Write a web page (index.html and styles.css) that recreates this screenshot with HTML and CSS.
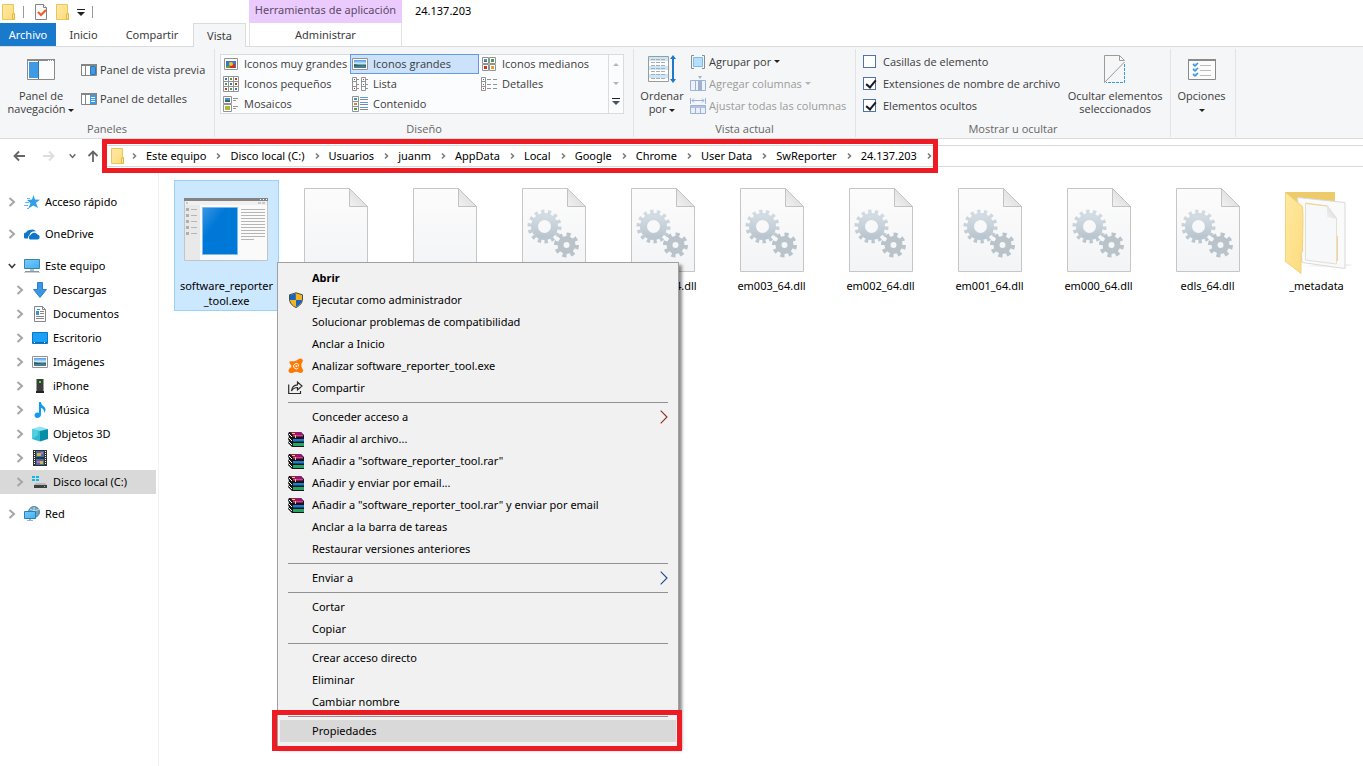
FILE: index.html
```html
<!DOCTYPE html>
<html lang="es">
<head>
<meta charset="utf-8">
<title>24.137.203</title>
<link rel="stylesheet" href="styles.css">
</head>
<body>
<svg class="defs" aria-hidden="true">
  <defs>
    <linearGradient id="g-yellow" x1="0" y1="0" x2="1" y2="1"><stop offset="0" stop-color="#ffe9a2"/><stop offset="1" stop-color="#fddb7c"/></linearGradient>
    <linearGradient id="g-page" x1="0" y1="0" x2="0" y2="1"><stop offset="0" stop-color="#fcfcfc"/><stop offset="1" stop-color="#f3f4f6"/></linearGradient>
    <linearGradient id="g-fold" x1="0" y1="1" x2="1" y2="0"><stop offset="0" stop-color="#f2f2f2"/><stop offset="1" stop-color="#d2d2d2"/></linearGradient>
    <linearGradient id="g-blue" x1="0" y1="0" x2="1" y2="1"><stop offset="0" stop-color="#3a96e3"/><stop offset=".35" stop-color="#0078d7"/></linearGradient>
    <linearGradient id="g-screen" x1="0" y1="0" x2="1" y2="1"><stop offset="0" stop-color="#79cbfb"/><stop offset="1" stop-color="#3fb0f5"/></linearGradient>
    <linearGradient id="g-sky" x1="0" y1="0" x2="0" y2="1"><stop offset="0" stop-color="#4b97ec"/><stop offset=".5" stop-color="#d9f0fb"/><stop offset=".6" stop-color="#3f7d86"/><stop offset="1" stop-color="#4d7ca0"/></linearGradient>
    <linearGradient id="g-gear" x1="0" y1="0" x2="0" y2="1"><stop offset="0" stop-color="#d3dbe2"/><stop offset="1" stop-color="#bac6cf"/></linearGradient>
  </defs>
  <symbol id="folder" viewBox="0 0 16 16"><path d="M1.5.5h11v9h1v6h-12z" fill="url(#g-yellow)" stroke="#e8c65c"/><path d="M11.5 15v-5h2v5.500z" fill="#ffe48f" stroke="#e3b93f"/></symbol>
  <symbol id="check-doc" viewBox="0 0 16 16"><path d="M2.500.5h8l3 3v12h-11z" fill="#fafafa" stroke="#858585"/><path d="M10.500.5v3h3" fill="#fff" stroke="#858585"/><path d="M5 8l3 3 5-5" fill="none" stroke="#ee5a24" stroke-width="2"/></symbol>
  <symbol id="pane-nav" viewBox="0 0 28 21"><path fill="#fcfcfc" stroke="#8a8a8a" d="M.5.5h27v20H.5z"/><path fill="#8a8a8a" d="M0 0h28v2H0z"/><path fill="#409ae2" d="M2 3h9v16H2z"/><path fill="#2e78b5" d="M11 2h1v18h-1z"/><path fill="#fff" d="M21 1h1v1h-1zm2 0h1v1h-1zm2 0h1v1h-1z"/></symbol>
  <symbol id="pane-preview" viewBox="0 0 16 12"><path fill="#fff" stroke="#858585" d="M.5.5h15v11H.5z"/><path fill="#858585" d="M0 0h16v2H0zM4 2h1v9H4z"/><path fill="#409ae2" stroke="#2878bf" d="M9.500 2.500h5v8h-5z"/></symbol>
  <symbol id="pane-details" viewBox="0 0 16 12"><path fill="#fff" stroke="#858585" d="M.5.5h15v11H.5z"/><path fill="#858585" d="M0 0h16v2H0zM4 2h1v9H4z"/><path fill="#409ae2" d="M9 2h6v9H9z"/><path d="M10 4.500h4M10 6.500h4M10 8.500h4" stroke="#e3f2fd"/></symbol>
  <symbol id="photo-xl" viewBox="0 0 16 14"><path fill="#fff" stroke="#939393" d="M1.500 1.500h13v11h-13z"/><path fill="#3f76cc" d="M3 4h10v7H3z"/><path fill="#d92e1c" d="M7 7h5v4H7z"/><circle cx="8" cy="7" r="2" fill="#f2c522"/><path fill="#5ba63d" d="M3 9h4v2H3z"/></symbol>
  <symbol id="photo" viewBox="0 0 16 14"><path fill="#fff" stroke="#939393" d="M.5 1.500h15v11H.5z"/><path fill="url(#g-sky)" d="M2 3h12v8H2z"/><path fill="#2d6060" d="M2 7l4 1 5 1 3-1v1H2z"/></symbol>
  <symbol id="ic-medium" viewBox="0 0 16 14"><path fill="#fff" stroke="#939393" d="M1.500.5h6v6h-6zM8.500.5h6v6h-6zM1.500 7.500h6v6h-6zM8.500 7.500h6v6h-6z"/><path fill="#4a8fce" d="M3 2h3v2H3z"/><path fill="#3c6c62" d="M3 4h3v1H3z"/><path fill="#4f9d4b" d="M10 2h3v3h-3z"/><path fill="#cf2f20" d="M3 9h3v3H3z"/><path fill="#e3a42a" d="M10 9h3v3h-3z"/></symbol>
  <symbol id="ic-small" viewBox="0 0 16 16"><path fill="#fff" stroke="#939393" d="M.5.5h15v15H.5zM5.500.5v15M10.500.5v15M.5 5.500h15M.5 10.500h15"/><path fill="#3a71be" d="M2 2h2v2H2zm5 5h2v2H7zm5 5h2v2h-2z"/><path fill="#4e9b45" d="M7 2h2v2H7zM2 7h2v2H2zm5 5h2v2H7z"/><path fill="#c93728" d="M12 2h2v2h-2zm0 5h2v2h-2zM2 12h2v2H2z"/></symbol>
  <symbol id="ic-list" viewBox="0 0 16 14"><path fill="#fff" stroke="#939393" d="M.5.5h4v13h-4zM9.500.5h4v13h-4zM.5 4.500h4M.5 9.500h4M9.500 4.500h4M9.500 9.500h4M5 2.500h2M5 7.500h2M5 11.500h2M14 2.500h2M14 7.500h2M14 11.500h2"/><path fill="#3a71be" d="M2 2h1v1H2zm9 5h1v1h-1z"/><path fill="#c93728" d="M2 11h1v1H2zm9-9h1v1h-1z"/></symbol>
  <symbol id="ic-details" viewBox="0 0 16 14"><path fill="#fff" stroke="#939393" d="M.5.5h4v13h-4zM.5 4.500h4M.5 9.500h4M6 2.500h4M6 7.500h4M6 11.500h4M12 2.500h4M12 7.500h4M12 11.500h4"/><path fill="#3a71be" d="M2 2h1v1H2z"/><path fill="#c93728" d="M2 7h1v1H2zm0 4h1v1H2z"/></symbol>
  <symbol id="ic-tiles" viewBox="0 0 16 16"><path fill="#fff" stroke="#939393" d="M.5.5h8v7h-8zM.5 8.500h8v7h-8zM10 2.500h5M10 4.500h3M10 10.500h5M10 12.500h3"/><path fill="#4a8fce" d="M2 2h5v2H2z"/><path fill="#3c6c62" d="M2 4h5v2H2z"/><path fill="#9bbf3d" d="M2 10h5v4H2z"/><path fill="#e3a42a" d="M3 11h2v2H3z"/></symbol>
  <symbol id="ic-content" viewBox="0 0 16 16"><path fill="#fff" stroke="#939393" d="M.5.5h6v15h-6zM.5 5.500h6M.5 10.500h6"/><path fill="#4a8fce" d="M2 2h3v2H2z"/><path fill="#c98d34" d="M2 7h3v2H2z"/><path fill="#4e9b45" d="M2 12h3v2H2z"/><path d="M8 1.500h8M8 6.500h8M8 11.500h8" stroke="#5a9be8"/><path d="M8 3.500h8M8 8.500h8M8 13.500h8" stroke="#878787"/></symbol>
  <symbol id="sort" viewBox="0 0 28 28"><path fill="#fff" stroke="#9b9b9b" d="M.5 1.500h20v25H.5z"/><path fill="#cbe6f7" d="M1 2h19v4H1zm0 9h19v4H1zm0 8h19v4H1z"/><path d="M3 4.500h15M3 7.500h15M3 10.500h15M3 13.500h15M3 16.500h15M3 19.500h15M3 23.500h15" stroke="#a9adb0" stroke-dasharray="4 1"/><path fill="#1f78c8" d="M25 0l3 4h-2v20h2l-3 4-3-4h2V4h-2z"/></symbol>
  <symbol id="group" viewBox="0 0 16 14"><path fill="none" stroke="#8b8b8b" d="M4 .5H1.500v13H4M12 .5h2.500v13H12"/><path fill="#b5dffb" stroke="#77bdf0" d="M3.500 2.500h9v9h-9z"/></symbol>
  <symbol id="addcol" viewBox="0 0 16 16"><path fill="#eef2fb" stroke="#a0b2d4" d="M.5 4.500h15v10H.5zM5.500 4.500v10"/><path fill="#9fb1d0" d="M8 4h4v11H8zM8 0h4l-2 3z"/></symbol>
  <symbol id="fitcol" viewBox="0 0 16 16"><path fill="none" stroke="#9db0d6" d="M.5 0v6M15.500 0v6M2 2.500h12M4 .5l-2 2 2 2M12 .5l2 2-2 2"/><path fill="#eaf0fb" stroke="#9db0d6" d="M.5 7.500h15v8H.5zM5.500 10v5M10.500 10v5"/><path fill="#b2c1df" d="M1 8h14v2H1z"/></symbol>
  <symbol id="hide" viewBox="0 0 22 28"><path fill="#f6f6f6" d="M.5.5H16L20.500 6v1L.5 27.500z"/><path fill="none" stroke="#9b9b9b" d="M15.500.5H.5v27L20.500 7"/><path fill="#fff" stroke="#9b9b9b" d="M15.500.5v5h5z"/><path fill="none" stroke="#3c97e3" stroke-dasharray="3 1" d="M20.500 9v18.500H2"/></symbol>
  <symbol id="options" viewBox="0 0 28 21"><path fill="#fcfcfc" stroke="#8a8a8a" d="M.5.5h27v20H.5z"/><path fill="#8a8a8a" d="M0 0h28v2H0z"/><path fill="#cde6f9" d="M5 4h4v3H5zm0 5h4v3H5zm0 5h4v3H5z"/><path fill="none" stroke="#3593e0" stroke-width="1.500" d="M5 5l2 2 3-3M5 10l2 2 3-3M5 15l2 2 3-3"/><path stroke="#bcbcbc" d="M12 6.500h11M12 11.500h11M12 16.500h11"/></symbol>
  <symbol id="chev" viewBox="0 0 8 10"><path d="M1.500 1L6 5 1.500 9" fill="none" stroke="currentColor" stroke-width="2"/></symbol>
  <symbol id="chev-s" viewBox="0 0 6 8"><path d="M1 1.500L3.500 4 1 6.500" fill="none" stroke="#7b7b7b" stroke-width="1.600"/></symbol>
  <symbol id="chev-d" viewBox="0 0 10 8"><path d="M1 1.500L5 6l4-4.500" fill="none" stroke="currentColor" stroke-width="2"/></symbol>
  <symbol id="arrow" viewBox="0 0 12 12"><path d="M12 6H1.500M6 1.500L1.500 6 6 10.500" fill="none" stroke="currentColor" stroke-width="1.800"/></symbol>
  <symbol id="star" viewBox="0 0 16 16"><path fill="#2f9fe9" d="M9.500 1l1.500 4.500 5 .3-4 3 2 5.200-4.700-2.600-5 3 2.200-5.200L3 6l5-.5z"/><path d="M1 8.500h4M0 11.500h4M3 4.500h3M3 14.500h2" stroke="#5fb8f2"/></symbol>
  <symbol id="cloud" viewBox="0 0 16 16"><path fill="#1176c8" d="M1 12.500a3.200 3.200 0 0 1 1-6A4 4 0 0 1 6 4a5 5 0 0 1 6 1.500A5 5 0 0 0 5.500 9 4 4 0 0 0 4 12.500z"/><path fill="#1176c8" d="M6 13.500a2.500 2.500 0 0 1 .5-4.500A4 4 0 0 1 13.500 8.500a2.600 2.600 0 0 1 .5 5z"/></symbol>
  <symbol id="pc" viewBox="0 0 16 16"><path fill="url(#g-screen)" stroke="#4183a8" d="M.5 1.500h15v9H.5z"/><path fill="#b2c0ca" d="M6 11h4v2H6z"/><path fill="#8298a8" d="M1 13h14v1H1z"/><path fill="#c6d1d9" d="M0 14h16v1H0z"/></symbol>
  <symbol id="down" viewBox="0 0 16 16"><path fill="#3b97e3" stroke="#2e7fc5" d="M5.500.5h5v7h4L8 15.500 1.500 7.500h4z"/></symbol>
  <symbol id="doc" viewBox="0 0 16 16"><path fill="#fcfcfc" stroke="#868686" d="M2.500.5h8l3 3v12h-11z"/><path fill="none" stroke="#868686" d="M10.500.5v3h3M8 5.500h4M8 7.500h4M4 10.500h8M4 12.500h8"/><path fill="#3694d6" d="M4 5h3v4H4zM5 3h3v1H5z"/></symbol>
  <symbol id="desk" viewBox="0 0 16 16"><path fill="#1ca0f7" stroke="#0778c6" d="M.5 2.500h15v11H.5z"/><path fill="#0b6caf" d="M1 12h14v1H1z"/><path fill="#fff" d="M2 12h1v1H2zm10 0h1v1h-1z"/></symbol>
  <symbol id="phone" viewBox="0 0 16 16"><path fill="#3c3c3c" d="M4.500 1h7v12h-7z"/><path fill="#252525" d="M4 13h8v2H4z"/><path fill="#3dea35" d="M7 3h2v2H7z"/></symbol>
  <symbol id="music" viewBox="0 0 16 16"><path fill="#129cf0" d="M7 0h2c0 4 5 4 4.500 8.500L12 11c.5-3-1-4.500-3-5v7c-.5 3.500-6.500 4-6.500.5C2.500 11 5 10 7 11z"/></symbol>
  <symbol id="cube" viewBox="0 0 16 16"><path fill="#8fe4ef" d="M0 3l8-2.500L16 3 8 6z"/><path fill="#2db9d0" d="M0 3l8 2v10.500L0 13z"/><path fill="#078fa8" d="M16 3L8 5v10.500l8-2.500z"/><path fill="#53cfe0" d="M0 3l6 1.500V9L0 13z"/></symbol>
  <symbol id="video" viewBox="0 0 16 16"><path fill="#333" d="M1 0h14v16H1z"/><path fill="#3d6db3" d="M4 1h8v6H4zm0 8h8v6H4z"/><path fill="#deb33a" d="M5 3h4v3H5zm3 8h3v3H8z"/><path fill="#c86ba6" d="M9 2h2v2H9zm-4 9h3v2H5z"/><path stroke="#fff" stroke-dasharray="1 1" d="M2.500 1v14M13.500 1v14"/></symbol>
  <symbol id="disk" viewBox="0 0 16 16"><path fill="#11b5ee" d="M0 2h3v2H0zm4 0h3v2H4zM0 5h3v2H0zm4 0h3v2H4z"/><path fill="#b7b7b7" d="M4 9h9l2 2H2z"/><path fill="#3f3f3f" d="M2 11h13v3H2z"/><path fill="#53e043" d="M12 12h1v1h-1z"/></symbol>
  <symbol id="net" viewBox="0 0 16 16"><circle cx="10" cy="6" r="5.500" fill="#6fa3bd" stroke="#4e86a5"/><path fill="none" stroke="#cbe1eb" d="M6 3c3 2 6 2 9 0M10 1v6"/><path fill="url(#g-screen)" stroke="#2a7fb8" d="M.5 5.500h11v7H.5z"/><path fill="#a3b3bf" d="M5 13h2v1H5zM3 14h6v1H3z"/></symbol>
  <symbol id="shield" viewBox="0 0 16 16"><path fill="#f6b41c" stroke="#3f4d56" d="M8 .8L14.500 2.800V7c0 4-3 7-6.500 8.500C4.500 14 1.500 11 1.500 7V2.800z"/><path fill="#1464c0" d="M7.800 1.500V8H2V3.200zM8 8h6c-.4 3-3 5.500-6 6.800z"/></symbol>
  <symbol id="avast" viewBox="0 0 16 16"><path fill="#ff7800" d="M1.500 3.500C4 2.500 6.500 4 8.500 2.500 10 1.500 11 .5 12.500.5c2 0 2.800 2 2 3.500-.8 1.200-1.700 2.500-1 4.500.5 1.700 1.700 2.800 1.500 4.500-.3 2-2.500 2.300-4 1.500-1.700-1-3.700-1.200-5.500 0C4 15.500.5 15.500.5 12.500c0-2 2.500-2.500 3-4C4 7 1 6.500 1.500 3.500z"/><path fill="none" stroke="#fff" d="M10.300 10a2.700 2.700 0 1 1 .3-3.300L10 8.500"/><path fill="#fff" d="M7.500 7.300h1.600V9H7.500z"/></symbol>
  <symbol id="share" viewBox="0 0 16 16"><path fill="none" stroke="#2c2c2c" stroke-width="1.200" d="M.7 4.500v9h11.800V11M3.500 11C4 7 6 5 9.500 4.800V2L14 6l-4.500 4V7.500C6.500 7.500 5 8.500 3.500 11z"/></symbol>
  <symbol id="rar" viewBox="0 0 16 16"><path fill="#151515" d="M1 1h12l3 3v12H4l-4-4 1-2-1-2 1-2-1-3z"/><path fill="#99186d" d="M2 1h11l2 3H5z"/><path fill="#d53d98" d="M5 4h10v1H5z"/><path fill="#8f125e" d="M5 5h10v1H5z"/><path fill="#237bc8" d="M5 8h11v2H5z"/><path fill="#0d4885" d="M5 10h11v1H5z"/><path fill="#27a465" d="M5 12h11v3H5z"/><path stroke="#fff" fill="none" d="M1 3l3 3M1 7l3 3M1 11l3 3"/><path fill="#edd53d" d="M4 2h3v1H4zM7 4h1v3H7z"/></symbol>
  <symbol id="sub" viewBox="0 0 8 14"><path d="M.7.700L7 7 .7 13.300" fill="none" stroke="currentColor" stroke-width="1.100"/></symbol>
  <symbol id="big-app" viewBox="0 0 96 96"><path fill="#fafafa" stroke="#c4c4c4" d="M5.500 16.500h83v62h-83z"/><path fill="#838383" d="M5 16h84v3H5z"/><path fill="#f0f0f0" d="M6 19h82v4H6z"/><path fill="#e9e9e9" d="M6 23h15v55H6z"/><path stroke="#fff" d="M81 17.500h1M84 17.500h1M87 17.500h1"/><path stroke="#c7c7c7" stroke-width="2" d="M7 21h2M79 21h3M83 21h3"/><path stroke="#afafaf" stroke-width="3" d="M7 27.500h3M7 33.500h3M7 39.500h3M7 45.500h3M7 51.500h3"/><path stroke="#b5b5b5" d="M12 27.500h6M12 33.500h6M12 39.500h6M12 45.500h6M12 51.500h6M62 27.500h24M62 30.500h24M62 33.500h24M62 36.500h24M62 39.500h24M62 42.500h24M62 45.500h24M62 48.500h24M62 51.500h24M62 54.500h24M62 57.500h13"/><path fill="url(#g-blue)" stroke="#82b9e5" d="M23.500 25.500h35v47h-35z"/></symbol>
  <symbol id="big-file" viewBox="0 0 96 96"><path fill="url(#g-page)" stroke="#c6c6c6" d="M16.500 6.500h45l18 18v65h-63z"/><path fill="url(#g-fold)" stroke="#c2c2c2" d="M61.500 6.500v18h18z"/></symbol>
  <symbol id="big-dll" viewBox="0 0 96 96"><use href="#big-file"/><g fill="none" stroke="url(#g-gear)"><circle cx="38.500" cy="44.500" r="10" stroke-width="7"/><circle cx="38.500" cy="44.500" r="14.500" stroke-width="5" pathLength="28" stroke-dasharray="1 1"/></g><g fill="none" stroke="#b9c3c9"><circle cx="60.500" cy="63" r="6" stroke-width="6"/><circle cx="60.500" cy="63" r="10" stroke-width="5" pathLength="16" stroke-dasharray="1 1"/></g></symbol>
  <symbol id="big-folder" viewBox="0 0 96 96"><path fill="#eccb68" d="M16 10h50v70H32z"/><path fill="#f2f2f2" d="M34 84l36 2 14-3-10-2z"/><path fill="#fafafa" stroke="#dadada" d="M28.500 15.500l47.500 5v66l-43-6z"/><path fill="#f7f8f9" stroke="#e3dfd2" d="M36.500 21l22 3 9 12v46l-31-4z"/><path fill="none" stroke="#f0d68c" d="M37 21.500l21 2.500M68.500 54v25"/><path fill="url(#g-fold)" d="M58 23v12l10 2z"/><path fill="url(#g-yellow)" stroke="#f2d27b" d="M16.500 10.500l17 14c1 15 0 28 0 45l-1.500 2v20l-15.500-12z"/></symbol>
</svg>

<header class="window-head">
  <div class="titlebar">
    <div class="quick">
      <svg class="i16"><use href="#folder"/></svg><span class="bar"></span>
      <button type="button" aria-label="Propiedades" class="plain"><svg class="i16"><use href="#check-doc"/></svg></button>
      <button type="button" aria-label="Nueva carpeta" class="plain"><svg class="i16"><use href="#folder"/></svg></button>
      <button type="button" aria-label="Personalizar" class="plain quick-more"><span class="caret"></span></button><span class="bar"></span>
    </div>
    <div class="context-title">Herramientas de aplicación</div>
    <h1 class="title">24.137.203</h1>
  </div>
  <nav class="tabs">
    <button type="button" class="tab tab-file">Archivo</button>
    <button type="button" class="tab tab-home">Inicio</button>
    <button type="button" class="tab tab-share">Compartir</button>
    <button type="button" class="tab tab-view">Vista</button>
    <button type="button" class="tab tab-manage">Administrar</button>
  </nav>
</header>

<section class="ribbon">
  <div class="group group-panes">
    <div class="group-body">
      <button type="button" class="big"><span class="big-icon"><svg width="28" height="21"><use href="#pane-nav"/></svg></span><span>Panel de<br>navegación <i class="caret"></i></span></button>
      <div class="stack stack-two">
        <button type="button" class="cmd"><svg width="16" height="12"><use href="#pane-preview"/></svg>Panel de vista previa</button>
        <button type="button" class="cmd"><svg width="16" height="12"><use href="#pane-details"/></svg>Panel de detalles</button>
      </div>
    </div>
    <div class="group-label">Paneles</div>
  </div>
  <div class="group group-layout">
    <div class="group-body">
      <div class="gallery">
        <div class="gallery-grid">
          <button type="button" class="view"><svg class="i16"><use href="#photo-xl"/></svg>Iconos muy grandes</button>
          <button type="button" class="view view-on"><svg class="i16"><use href="#photo"/></svg>Iconos grandes</button>
          <button type="button" class="view"><svg class="i16"><use href="#ic-medium"/></svg>Iconos medianos</button>
          <button type="button" class="view"><svg class="i16"><use href="#ic-small"/></svg>Iconos pequeños</button>
          <button type="button" class="view"><svg class="i16"><use href="#ic-list"/></svg>Lista</button>
          <button type="button" class="view"><svg class="i16"><use href="#ic-details"/></svg>Detalles</button>
          <button type="button" class="view"><svg class="i16"><use href="#ic-tiles"/></svg>Mosaicos</button>
          <button type="button" class="view"><svg class="i16"><use href="#ic-content"/></svg>Contenido</button>
        </div>
        <div class="gallery-scroll">
          <button type="button" class="plain" aria-label="Subir"><span class="caret caret-up caret-dim"></span></button>
          <button type="button" class="plain" aria-label="Bajar"><span class="caret caret-dim"></span></button>
          <button type="button" class="plain" aria-label="Más"><span class="caret caret-more"></span></button>
        </div>
      </div>
    </div>
    <div class="group-label">Diseño</div>
  </div>
  <div class="group group-current">
    <div class="group-body">
      <button type="button" class="big"><span class="big-icon"><svg width="28" height="28"><use href="#sort"/></svg></span><span>Ordenar<br>por <i class="caret"></i></span></button>
      <div class="stack">
        <button type="button" class="cmd"><svg class="i16"><use href="#group"/></svg>Agrupar por <i class="caret"></i></button>
        <button type="button" class="cmd" disabled><svg class="i16"><use href="#addcol"/></svg>Agregar columnas <i class="caret caret-dim"></i></button>
        <button type="button" class="cmd" disabled><svg class="i16"><use href="#fitcol"/></svg>Ajustar todas las columnas</button>
      </div>
    </div>
    <div class="group-label">Vista actual</div>
  </div>
  <div class="group group-show">
    <div class="group-body">
      <div class="stack">
        <label class="check"><input type="checkbox">Casillas de elemento</label>
        <label class="check"><input type="checkbox" checked>Extensiones de nombre de archivo</label>
        <label class="check"><input type="checkbox" checked>Elementos ocultos</label>
      </div>
      <button type="button" class="big"><span class="big-icon"><svg width="22" height="28"><use href="#hide"/></svg></span><span>Ocultar elementos<br>seleccionados</span></button>
    </div>
    <div class="group-label">Mostrar u ocultar</div>
  </div>
  <div class="group group-options">
    <div class="group-body">
      <button type="button" class="big"><span class="big-icon"><svg width="28" height="21"><use href="#options"/></svg></span><span>Opciones<br><i class="caret"></i></span></button>
    </div>
  </div>
</section>

<div class="address-row">
  <div class="nav-buttons">
    <button type="button" class="plain" aria-label="Atrás"><svg width="12" height="12"><use href="#arrow"/></svg></button>
    <button type="button" class="plain forward" aria-label="Adelante" disabled><svg width="12" height="12"><use href="#arrow"/></svg></button>
    <button type="button" class="plain recent" aria-label="Recientes"><svg width="7" height="6"><use href="#chev-d"/></svg></button>
    <button type="button" class="plain up" aria-label="Arriba"><svg width="12" height="12"><use href="#arrow"/></svg></button>
  </div>
  <nav class="address">
    <svg class="i16"><use href="#folder"/></svg>
    <svg class="crumb-sep"><use href="#chev-s"/></svg><a href="#">Este equipo</a>
    <svg class="crumb-sep"><use href="#chev-s"/></svg><a href="#">Disco local (C:)</a>
    <svg class="crumb-sep"><use href="#chev-s"/></svg><a href="#">Usuarios</a>
    <svg class="crumb-sep"><use href="#chev-s"/></svg><a href="#">juanm</a>
    <svg class="crumb-sep"><use href="#chev-s"/></svg><a href="#">AppData</a>
    <svg class="crumb-sep"><use href="#chev-s"/></svg><a href="#">Local</a>
    <svg class="crumb-sep"><use href="#chev-s"/></svg><a href="#">Google</a>
    <svg class="crumb-sep"><use href="#chev-s"/></svg><a href="#">Chrome</a>
    <svg class="crumb-sep"><use href="#chev-s"/></svg><a href="#">User Data</a>
    <svg class="crumb-sep"><use href="#chev-s"/></svg><a href="#">SwReporter</a>
    <svg class="crumb-sep"><use href="#chev-s"/></svg><a href="#">24.137.203</a>
    <svg class="crumb-sep"><use href="#chev-s"/></svg>
  </nav>
  <div class="mark mark-address"></div>
</div>

<div class="main">
  <aside class="tree">
    <a href="#" class="node"><svg class="chev"><use href="#chev"/></svg><svg class="i16"><use href="#star"/></svg>Acceso rápido</a>
    <a href="#" class="node"><svg class="chev"><use href="#chev"/></svg><svg class="i16"><use href="#cloud"/></svg>OneDrive</a>
    <div class="branch">
      <a href="#" class="node"><svg class="chev chev-open"><use href="#chev-d"/></svg><svg class="i16"><use href="#pc"/></svg>Este equipo</a>
      <a href="#" class="node child"><svg class="chev"><use href="#chev"/></svg><svg class="i16"><use href="#down"/></svg>Descargas</a>
      <a href="#" class="node child"><svg class="chev"><use href="#chev"/></svg><svg class="i16"><use href="#doc"/></svg>Documentos</a>
      <a href="#" class="node child"><svg class="chev"><use href="#chev"/></svg><svg class="i16"><use href="#desk"/></svg>Escritorio</a>
      <a href="#" class="node child"><svg class="chev"><use href="#chev"/></svg><svg class="i16"><use href="#photo"/></svg>Imágenes</a>
      <a href="#" class="node child"><svg class="chev"><use href="#chev"/></svg><svg class="i16"><use href="#phone"/></svg>iPhone</a>
      <a href="#" class="node child"><svg class="chev"><use href="#chev"/></svg><svg class="i16"><use href="#music"/></svg>Música</a>
      <a href="#" class="node child"><svg class="chev"><use href="#chev"/></svg><svg class="i16"><use href="#cube"/></svg>Objetos 3D</a>
      <a href="#" class="node child"><svg class="chev"><use href="#chev"/></svg><svg class="i16"><use href="#video"/></svg>Vídeos</a>
      <a href="#" class="node child node-on"><svg class="chev"><use href="#chev"/></svg><svg class="i16"><use href="#disk"/></svg>Disco local (C:)</a>
    </div>
    <a href="#" class="node"><svg class="chev"><use href="#chev"/></svg><svg class="i16"><use href="#net"/></svg>Red</a>
  </aside>
  <main class="files">
    <div class="file file-on"><svg class="i96"><use href="#big-app"/></svg><span>software_reporter<br>_tool.exe</span></div>
    <div class="file"><svg class="i96"><use href="#big-file"/></svg></div>
    <div class="file"><svg class="i96"><use href="#big-file"/></svg></div>
    <div class="file"><svg class="i96"><use href="#big-dll"/></svg></div>
    <div class="file"><svg class="i96"><use href="#big-dll"/></svg><span>em004_64.dll</span></div>
    <div class="file"><svg class="i96"><use href="#big-dll"/></svg><span>em003_64.dll</span></div>
    <div class="file"><svg class="i96"><use href="#big-dll"/></svg><span>em002_64.dll</span></div>
    <div class="file"><svg class="i96"><use href="#big-dll"/></svg><span>em001_64.dll</span></div>
    <div class="file"><svg class="i96"><use href="#big-dll"/></svg><span>em000_64.dll</span></div>
    <div class="file"><svg class="i96"><use href="#big-dll"/></svg><span>edls_64.dll</span></div>
    <div class="file"><svg class="i96"><use href="#big-folder"/></svg><span>_metadata</span></div>
  </main>
</div>

<div class="menu" role="menu">
  <button type="button" role="menuitem" class="item item-default">Abrir</button>
  <button type="button" role="menuitem" class="item"><svg class="i16"><use href="#shield"/></svg>Ejecutar como administrador</button>
  <button type="button" role="menuitem" class="item">Solucionar problemas de compatibilidad</button>
  <button type="button" role="menuitem" class="item">Anclar a Inicio</button>
  <button type="button" role="menuitem" class="item"><svg class="i16"><use href="#avast"/></svg>Analizar software_reporter_tool.exe</button>
  <button type="button" role="menuitem" class="item"><svg class="i16"><use href="#share"/></svg>Compartir</button>
  <hr>
  <button type="button" role="menuitem" class="item">Conceder acceso a<svg class="sub sub-red"><use href="#sub"/></svg></button>
  <button type="button" role="menuitem" class="item"><svg class="i16"><use href="#rar"/></svg>Añadir al archivo...</button>
  <button type="button" role="menuitem" class="item"><svg class="i16"><use href="#rar"/></svg>Añadir a "software_reporter_tool.rar"</button>
  <button type="button" role="menuitem" class="item"><svg class="i16"><use href="#rar"/></svg>Añadir y enviar por email...</button>
  <button type="button" role="menuitem" class="item"><svg class="i16"><use href="#rar"/></svg>Añadir a "software_reporter_tool.rar" y enviar por email</button>
  <button type="button" role="menuitem" class="item">Anclar a la barra de tareas</button>
  <button type="button" role="menuitem" class="item">Restaurar versiones anteriores</button>
  <hr>
  <button type="button" role="menuitem" class="item">Enviar a<svg class="sub"><use href="#sub"/></svg></button>
  <hr>
  <button type="button" role="menuitem" class="item">Cortar</button>
  <button type="button" role="menuitem" class="item">Copiar</button>
  <hr>
  <button type="button" role="menuitem" class="item">Crear acceso directo</button>
  <button type="button" role="menuitem" class="item">Eliminar</button>
  <button type="button" role="menuitem" class="item">Cambiar nombre</button>
  <hr>
  <button type="button" role="menuitem" class="item item-on">Propiedades</button>
  <div class="mark mark-item"></div>
</div>
</body>
</html>
```
FILE: styles.css
```css
* { box-sizing: border-box; }

body {
  margin: 0;
  min-height: 100vh;
  display: flex;
  flex-direction: column;
  position: relative;
  overflow: hidden;
  background: #fff;
  color: #000;
  font: 11px/15px "Noto Sans", "Open Sans", sans-serif;
}

button { font: inherit; color: inherit; background: none; border: 0; padding: 0; margin: 0; white-space: nowrap; }
a { color: inherit; text-decoration: none; }
svg { display: block; flex: none; }
.defs { position: absolute; width: 0; height: 0; }
.i16 { width: 16px; height: 16px; }
.i96 { width: 96px; height: 96px; }
.plain { display: flex; align-items: center; justify-content: center; }

.caret {
  display: inline-block;
  vertical-align: middle;
  border: 3px solid transparent;
  border-top-color: #222;
  border-bottom-width: 0;
}
.caret-dim { border-top-color: #b4b4b4; }
.caret-up { border: 3px solid transparent; border-top-width: 0; border-bottom-color: #b4b4b4; }
.caret-more, .quick-more .caret { position: relative; }
.caret-more { border-top: 4px solid #44546a; border-left-width: 4px; border-right-width: 4px; }
.quick-more .caret { border-top-width: 4px; border-left-width: 4px; border-right-width: 4px; }
.caret-more::before, .quick-more .caret::before { content: ""; position: absolute; left: -4px; top: -7px; width: 8px; height: 1px; background: #222; }

/* Title bar and tabs */
.titlebar { display: flex; height: 23px; }
.quick { display: flex; align-items: center; width: 249px; }
.quick .bar { width: 1px; height: 12px; background: #9a9a9a; }
.quick > .i16 { margin: 0 6px 0 1px; }
.quick .bar + .plain { margin-left: 9px; }
.quick .plain + .plain { margin-left: 6px; }
.quick .plain + .quick-more { width: 12px; height: 16px; margin-left: 4px; padding-top: 5px; }
.quick .quick-more + .bar { margin-left: 5px; }
.context-title { width: 153px; background: #ebcbfd; color: #5b4a66; text-align: center; line-height: 20px; white-space: nowrap; }
.title { margin: 0 0 0 13px; font-size: 11px; font-weight: 400; line-height: 22px; }

.tabs { display: flex; height: 24px; border-bottom: 1px solid #dadbdc; color: #3b3b3b; }
.tab { height: 23px; }
.tab-file { width: 56px; background: #1979ca; color: #fff; }
.tab-home { width: 55px; }
.tab-share { width: 82px; }
.tab-view { width: 53px; height: 24px; margin-right: 3px; background: #f5f6f7; border: 1px solid #dadbdc; border-bottom: 0; }
.tab-manage { width: 153px; border: 1px solid #e2e2e2; border-width: 0 1px; }

/* Ribbon */
.ribbon { display: flex; height: 92px; background: #f5f6f7; border-bottom: 1px solid #dadbdc; color: #3b3b3b; font-family: "Open Sans", "Noto Sans", sans-serif; }
.group { display: flex; flex-direction: column; margin: 2px 0 1px; border-right: 1px solid #e2e3e4; }
.group-body { display: flex; flex: 1; }
.group-label { height: 16px; line-height: 16px; text-align: center; color: #666; }
.group-panes { width: 215px; }
.group-layout { width: 419px; }
.group-current { width: 222px; }
.group-show { width: 315px; }
.group-options { width: 65px; padding-right: 3px; }

.big { display: flex; flex: none; flex-direction: column; align-items: center; line-height: 13px; }
.big-icon { display: flex; align-items: center; height: 40px; }
.group-panes .big { width: 81px; padding-left: 1px; }
.group-current .big { width: 56px; }
.group-show .big, .group-options .big { flex: 1; }
.stack { display: flex; flex-direction: column; padding-top: 2px; }
.stack > * { height: 22px; }
.stack-two { padding-top: 6px; }
.stack-two > * { height: 29px; }
.cmd { display: flex; align-items: center; gap: 3px; }
.stack:not(.stack-two) .cmd { padding-bottom: 1px; }
.cmd:disabled { color: #9b9b9b; }
.check { display: flex; align-items: center; gap: 7px; margin-left: 7px; padding-bottom: 1px; white-space: nowrap; }
.check input { appearance: none; width: 13px; height: 13px; margin: 0; background: #fff; border: 1px solid #5273a8; }
.check input:checked::before { content: ""; display: block; width: 4px; height: 8px; margin: 0 0 0 4px; border: solid #1b1b1b; border-width: 0 2px 2px 0; transform: rotate(40deg); }

.gallery { display: flex; align-self: flex-start; width: 404px; height: 60px; margin: 5px 0 0 5px; background: #fbfcfd; border: 1px solid #dadbdc; }
.gallery-grid { display: grid; flex: 1; grid-template-columns: repeat(3, minmax(0, 1fr)); grid-auto-rows: 20px; margin-top: -1px; }
.view { display: flex; align-items: center; gap: 5px; padding: 0 0 1px 1px; border: 1px solid transparent; }
.view .i16, .cmd .i16, .node .i16 { margin-bottom: -1px; }
.view-on { background: #cce2fb; border-color: #659be0; }
.gallery-scroll { display: grid; grid-template-rows: repeat(3, 1fr); width: 15px; border-left: 1px solid #dadbdc; }

/* Address row */
.address-row { display: flex; align-items: center; position: relative; height: 34px; }
.nav-buttons { display: flex; align-items: center; width: 107px; padding-left: 13px; color: #666; }
.forward { margin-left: 18px; color: #ddd; transform: scaleX(-1); }
.recent { margin-left: 14px; }
.up { margin-left: 11px; transform: rotate(90deg); }
.address { display: flex; flex: 1; align-items: center; height: 22px; padding: 0 0 1px 3px; border: 1px solid #d9d9d9; border-width: 1px 0; white-space: nowrap; }
.address .i16 { margin-bottom: -1px; }
.crumb-sep { width: 6px; height: 8px; margin: 0 8px 0 10px; }
.address .i16 + .crumb-sep { margin-left: 6px; }
.mark { position: absolute; border: 5px solid #ed1c24; pointer-events: none; }
.mark-address { left: 102px; top: 0; width: 836px; height: 34px; }

/* Tree and files */
.main { display: flex; flex: 1; }
.tree { display: flex; flex-direction: column; gap: 8px; width: 159px; padding: 17px 2px 0 0; border-right: 1px solid #f0f0f0; }
.branch { display: flex; flex-direction: column; }
.node { display: flex; align-items: center; height: 24px; padding: 0 0 1px 8px; gap: 5px; white-space: nowrap; }
.child { padding-left: 16px; }
.node-on { background: #d9d9d9; }
.chev { width: 8px; height: 10px; margin: 0 3px -1px 0; color: #a6a6a6; }
.chev-open { height: 8px; color: #404040; }
.files { display: flex; flex: 1; min-width: 0; align-items: flex-start; gap: 4px; padding: 7px 0 0 15px; overflow: hidden; }
.file { display: flex; flex: none; flex-direction: column; align-items: center; width: 105px; height: 131px; padding-top: 1px; border: 1px solid transparent; text-align: center; }
.file-on { background: #cce8ff; border-color: #99d1ff; }

/* Context menu */
.menu { position: absolute; left: 277px; top: 262px; width: 402px; padding: 4px 2px; background: #f1f1f1; border: 1px solid #a0a0a0; box-shadow: 3px 3px 3px rgba(0, 0, 0, .45); }
.item { display: flex; position: relative; align-items: center; width: 100%; height: 22px; padding: 0 8px 1px 32px; }
.item .i16 { margin: 0 8px -1px -24px; }
.item-default { font-weight: 700; }
.item-on { background: #d9d9d9; }
.sub { width: 8px; height: 14px; margin: 0 0 -1px auto; color: #1c4c8c; }
.sub-red { color: #8c2f1c; }
.menu hr { height: 1px; margin: 3px 8px; border: 0; background: #919191; }
.mark-item { left: -6px; top: 447px; width: 410px; height: 41px; }
```
